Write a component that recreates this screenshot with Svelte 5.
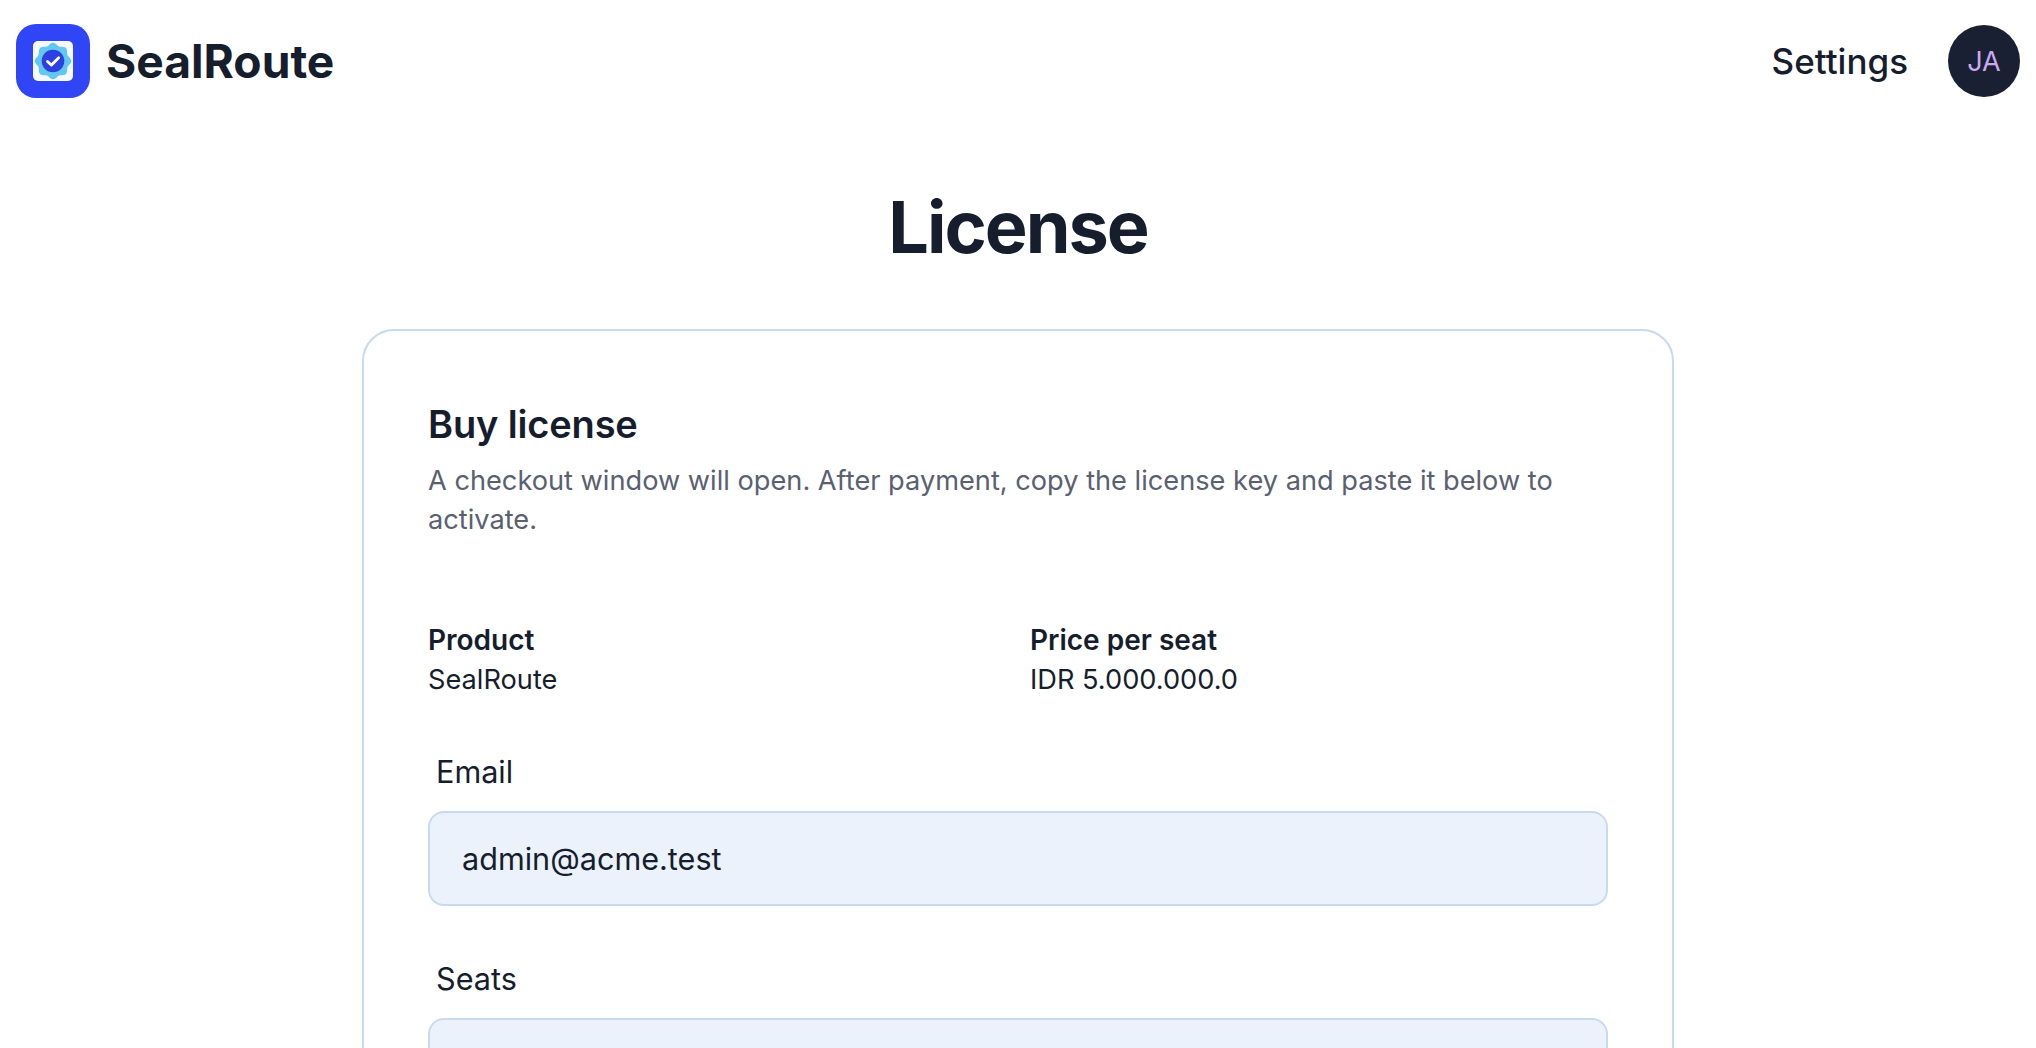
<script>
  const bumps = 8;
  const seal = Array.from({ length: 96 }, (_, i) => {
    const a = (i / 96) * Math.PI * 2;
    const r = 17 + 1.3 * Math.cos(bumps * a);
    return `${(37 + r * Math.cos(a)).toFixed(2)},${(37 + r * Math.sin(a)).toFixed(2)}`;
  }).join(' ');
</script>

<div class="page">
  <header class="topbar">
    <div class="brand">
      <svg class="logo" viewBox="0 0 74 74" aria-hidden="true">
        <rect width="74" height="74" rx="20" fill="#2f45f6" />
        <rect x="17" y="17" width="40" height="40" rx="5" fill="#f6f9fe" />
        <polygon points={seal} fill="#62c8f2" />
        <circle cx="37" cy="37" r="11.3" fill="#2c3fe0" />
        <path d="M31.5 37.5l4 3.6 7.2-7.4" fill="none" stroke="#fff" stroke-width="2.8" stroke-linecap="round" stroke-linejoin="round" />
      </svg>
      <span class="brand-name">SealRoute</span>
    </div>
    <nav class="nav">
      <span class="nav-link">Settings</span>
      <span class="avatar">JA</span>
    </nav>
  </header>

  <main class="main">
    <h1>License</h1>
    <section class="card">
      <h2>Buy license</h2>
      <p class="lead">A checkout window will open. After payment, copy the license key and paste it below to activate.</p>
      <dl class="facts">
        <div><dt>Product</dt><dd>SealRoute</dd></div>
        <div><dt>Price per seat</dt><dd>IDR 5.000.000.0</dd></div>
      </dl>
      <label class="field">
        <span>Email</span>
        <input type="text" value="admin@acme.test" />
      </label>
      <label class="field">
        <span>Seats</span>
        <input type="text" value="1" />
      </label>
    </section>
  </main>
</div>

<style>
  :global(html), :global(body) { height: 100%; overflow: hidden; }
  :global(body) { margin: 0; background: #fff; }
  .page { font-family: Inter, "Noto Sans", sans-serif; color: #161d2d; }
  .topbar { display: flex; justify-content: space-between; align-items: center; padding: 24px 16px 0; }
  .brand { display: flex; align-items: center; gap: 16px; }
  .logo { width: 74px; height: 74px; display: block; }
  .brand-name { font-size: 46.2px; font-weight: 700; }
  .nav { display: flex; align-items: center; gap: 40px; }
  .nav-link { font-size: 35px; font-weight: 500; }
  .avatar { width: 72px; height: 72px; border-radius: 50%; background: #182032; color: #cba9f2; font-size: 27px; display: flex; align-items: center; justify-content: center; }
  .main { display: flex; flex-direction: column; align-items: center; }
  h1 { margin: 85px 0 0; font-size: 72px; line-height: 88px; font-weight: 700; letter-spacing: -2px; }
  .card { box-sizing: border-box; width: 1312px; margin-top: 58px; padding: 64px 64px; border: 2px solid #c8daf0; border-radius: 32px; }
  h2 { margin: 3px 0 0; font-size: 38px; line-height: 52px; font-weight: 600; letter-spacing: -0.15px; }
  .lead { margin: 11px 0 0; font-size: 27.2px; line-height: 39px; color: #5a6070; }
  .facts { display: grid; grid-template-columns: 1fr 1fr; gap: 24px; margin: 81px 0 0; font-size: 27.2px; line-height: 40px; }
  dt { font-size: 28px; font-weight: 600; }
  dd { margin: 0; }
  .field { display: block; margin-top: 52px; }
  .facts + .field { margin-top: 51px; }
  .field span { display: block; padding-left: 8px; font-size: 30.6px; line-height: 42px; margin-bottom: 18px; }
  input { box-sizing: border-box; width: 100%; height: 95px; padding: 0 32px; border: 2px solid #c8daf0; border-radius: 16px; background: #ebf2fb; font: 400 30.6px Inter, "Noto Sans", sans-serif; color: #161d2d; outline: none; }
</style>
